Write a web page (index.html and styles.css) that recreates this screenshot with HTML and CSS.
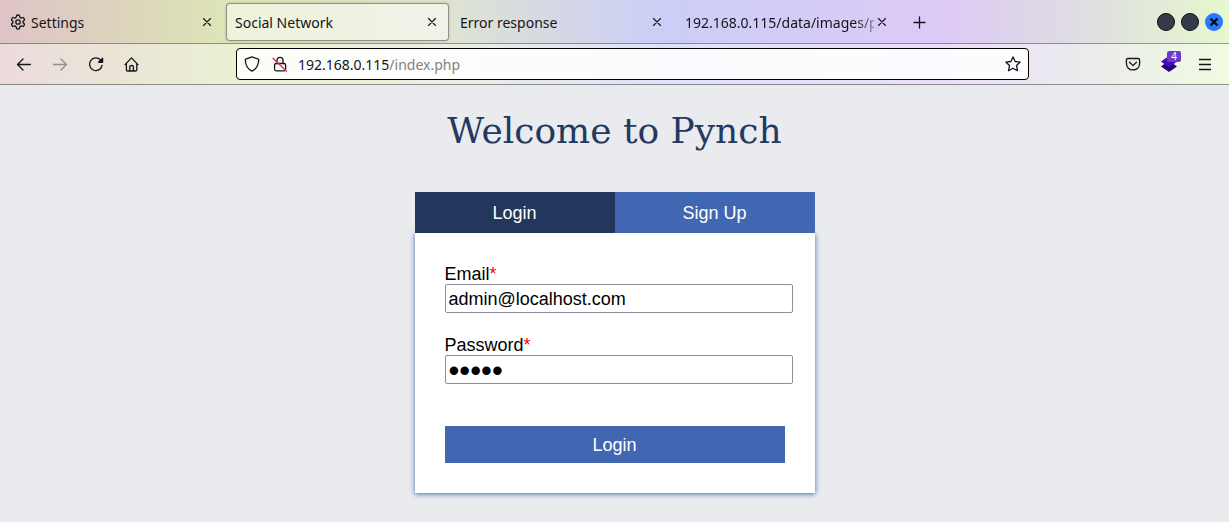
FILE: index.html
```
<!DOCTYPE html>
<html lang="en">
<head>
<meta charset="utf-8">
<title>Social Network</title>
<link rel="stylesheet" href="styles.css">
</head>
<body>
<header class="browser">
  <div class="tabbar">
    <nav class="tabs" aria-label="Open tabs">
      <div class="tab">
        <svg class="icon tab-icon" viewBox="0 0 16 16"><path d="M6.600 1.400Q8 .6 9.400 1.400L9.800 3.200 11.300 4.100 13.100 3.500Q14.500 4.400 14.500 5.900L13.100 7.200V8.800L14.500 10.100Q14.500 11.600 13.100 12.500L11.300 11.900 9.800 12.800 9.400 14.600Q8 15.400 6.600 14.600L6.200 12.800 4.700 11.900 2.900 12.500Q1.500 11.600 1.500 10.100L2.900 8.800V7.200L1.500 5.900Q1.500 4.400 2.900 3.500L4.700 4.100 6.200 3.200Z"/><circle cx="8" cy="8" r="2.200"/></svg>
        <span class="tab-title">Settings</span>
        <button class="tab-close" aria-label="Close Settings"><svg class="icon thin" viewBox="0 0 10 10"><path d="M1.500 1.500l7 7M8.500 1.500l-7 7"/></svg></button>
      </div>
      <div class="tab tab-active">
        <span class="tab-title">Social Network</span>
        <button class="tab-close" aria-label="Close Social Network"><svg class="icon thin" viewBox="0 0 10 10"><path d="M1.500 1.500l7 7M8.500 1.500l-7 7"/></svg></button>
      </div>
      <div class="tab">
        <span class="tab-title">Error response</span>
        <button class="tab-close" aria-label="Close Error response"><svg class="icon thin" viewBox="0 0 10 10"><path d="M1.500 1.500l7 7M8.500 1.500l-7 7"/></svg></button>
      </div>
      <div class="tab">
        <span class="tab-title tab-title-faded">192.168.0.115/data/images/pr</span>
        <button class="tab-close" aria-label="Close image tab"><svg class="icon thin" viewBox="0 0 10 10"><path d="M1.500 1.500l7 7M8.500 1.500l-7 7"/></svg></button>
      </div>
      <button class="tool" aria-label="New tab"><svg class="icon" viewBox="0 0 16 16"><path d="M8.500 3v11M3 8.500h11"/></svg></button>
    </nav>
    <div class="window-controls">
      <button class="dot" aria-label="Minimize"></button>
      <button class="dot" aria-label="Maximize"></button>
      <button class="dot dot-close" aria-label="Close window"><svg viewBox="0 0 18 18"><path d="M5.500 5.500l7 7M12.500 5.500l-7 7"/></svg></button>
    </div>
  </div>
  <div class="toolbar">
    <button class="tool" aria-label="Back"><svg class="icon" viewBox="0 0 16 16"><path d="M14.500 8.500H1.500M7 3L1.500 8.500 7 14"/></svg></button>
    <button class="tool" aria-label="Forward" disabled><svg class="icon" viewBox="0 0 16 16"><path d="M1.500 8.500h13M9 3L14.500 8.500 9 14"/></svg></button>
    <button class="tool" aria-label="Reload"><svg class="icon" viewBox="0 0 16 16"><path d="M12.500 4A6.300 6.300 0 1 0 14 9.500"/><path class="solid" d="M14.600 2.300V6.300H10.600Z"/></svg></button>
    <button class="tool" aria-label="Home"><svg class="icon" viewBox="0 0 16 16"><path d="M1 8.600L7.500 1.900 14 8.600M2.400 7.500V13.800Q2.400 15 3.600 15H11.600Q12.800 15 12.800 13.800V7.500M5.800 14.800V10.700Q5.800 9.500 7.600 9.500T9.400 10.700V14.800"/></svg></button>
    <div class="urlbar">
      <svg class="icon" viewBox="0 0 16 16"><path d="M8 .9L14.300 3.200Q14.800 3.400 14.700 4C14.400 10 12.200 13.200 8 15.200 3.800 13.200 1.600 10 1.300 4Q1.200 3.400 1.700 3.200Z"/></svg>
      <svg class="icon" viewBox="0 0 16 16"><path d="M5 7.500V4.300a3 3 0 0 1 6 0V7.500"/><rect x="2.600" y="7.500" width="11" height="7.300" rx="1.500"/><path class="slash" d="M1 2.200L14.500 15.300"/></svg>
      <a class="address" href="#"><span class="host">192.168.0.115</span>/index.php</a>
      <svg class="icon" viewBox="0 0 16 16"><path d="M8 .9L10.100 5.500 15.200 6.100 11.500 9.500 12.500 14.700 8 12.200 3.500 14.700 4.500 9.500 .8 6.100 5.900 5.500Z"/></svg>
    </div>
    <button class="tool" aria-label="Pocket"><svg class="icon" viewBox="0 0 16 16"><path d="M3 2.500H13Q14.600 2.500 14.600 4.100V7.300C14.600 11.500 11.800 13.900 8 13.900S1.400 11.500 1.400 7.300V4.100Q1.400 2.500 3 2.500ZM4.500 6.300L8 9.600 11.500 6.300"/></svg></button>
    <button class="tool extension" aria-label="Extension, 4 items">
      <svg class="layers" viewBox="0 0 16 16"><path class="layer-low" d="M0 10.500L8 4.500 16 10.500 8 16Z"/><path class="layer-top" d="M0 5.500L8 0 16 5.500 8 11.500Z"/></svg>
      <span class="badge">4</span>
    </button>
    <button class="tool" aria-label="Menu"><svg class="icon menu" viewBox="0 0 16 16"><path d="M2 3.500h12M2 8.500h12M2 13.500h12"/></svg></button>
  </div>
</header>
<main class="page">
  <h1 class="welcome">Welcome to Pynch</h1>
  <section class="auth">
    <div class="auth-tabs">
      <button class="auth-tab auth-tab-active">Login</button>
      <button class="auth-tab">Sign Up</button>
    </div>
    <form class="card">
      <div class="field">
        <label for="email">Email<span class="required">*</span></label>
        <input class="input" id="email" type="text" value="admin@localhost.com">
      </div>
      <div class="field">
        <label for="password">Password<span class="required">*</span></label>
        <input class="input input-password" id="password" type="password" value="admin">
      </div>
      <button class="submit" type="button">Login</button>
    </form>
  </section>
</main>
</body>
</html>
```
FILE: styles.css
```
* {
  box-sizing: border-box;
}

body {
  margin: 0;
  min-height: 100vh;
  background: #e9ebee;
  font-family: "Liberation Sans", Arial, sans-serif;
  font-size: 18px;
  color: #000;
}

button {
  padding: 0;
  border: 0;
  background: none;
  color: inherit;
  font: inherit;
}

.browser {
  background: linear-gradient(90deg, #dfc3c6 0%, #dcd5bc 10%, #dee6b6 19%, #dfe4d0 36%, #cbcef7 54%, #ddcaf6 77%, #dfdfdf 89%, #e6f8cf 100%);
  font-family: "Noto Sans", sans-serif;
  font-size: 14px;
  color: #15141a;
}

.icon {
  display: block;
  flex: none;
  width: 16px;
  height: 16px;
  fill: none;
  stroke: currentColor;
  stroke-width: 1.3;
  stroke-linecap: round;
  stroke-linejoin: round;
}

.icon .solid {
  fill: currentColor;
}

.icon .slash {
  stroke: #e22850;
}

.tabbar {
  display: flex;
  justify-content: space-between;
  align-items: center;
  height: 44px;
  padding: 0 6px 0 1px;
  border-bottom: 1px solid rgba(0, 0, 0, 0.35);
}

.tabs {
  display: flex;
  align-items: center;
  gap: 2px;
  min-width: 0;
}

.tab {
  display: flex;
  align-items: center;
  width: 223px;
  height: 38px;
  padding: 0 8px;
  border: 1px solid transparent;
  border-radius: 4px;
}

.tab-active {
  border-color: rgba(0, 0, 0, 0.4);
  background: rgba(255, 255, 255, 0.5);
  box-shadow: 0 0 3px rgba(0, 0, 0, 0.2);
}

.tab-icon {
  margin-right: 5px;
}

.tab-title {
  flex: 1;
  min-width: 0;
  padding-top: 2px;
  overflow: hidden;
  white-space: nowrap;
}

.tab-title-faded {
  -webkit-mask-image: linear-gradient(90deg, #000 170px, transparent 200px);
  mask-image: linear-gradient(90deg, #000 170px, transparent 200px);
}

.tab-close {
  display: grid;
  place-items: center;
  width: 16px;
  height: 24px;
}

.thin {
  width: 10px;
  height: 10px;
  stroke-width: 1.1;
}

.window-controls {
  display: flex;
  gap: 6px;
}

.dot {
  width: 18px;
  height: 18px;
  border: 1px solid #0c0d12;
  border-radius: 50%;
  background: #363b49;
}

.dot-close {
  border: 0;
  background: #2777ff;
}

.dot-close svg {
  display: block;
  width: 18px;
  height: 18px;
  stroke: #0c0d12;
  stroke-width: 2.4;
}

.toolbar {
  display: flex;
  align-items: center;
  height: 41px;
  padding: 0 6px;
  border-bottom: 1px solid rgba(0, 0, 0, 0.4);
  background: rgba(255, 255, 255, 0.4);
}

.tool {
  display: grid;
  flex: none;
  place-items: center;
  width: 36px;
  height: 32px;
}

.tool:disabled {
  opacity: 0.4;
}

.menu {
  stroke-linecap: butt;
}

.urlbar {
  display: flex;
  flex: 1;
  align-items: center;
  gap: 12px;
  height: 32px;
  margin: 0 86px;
  padding: 0 7px;
  border: 1px solid #000;
  border-radius: 4px;
  background: rgba(255, 255, 255, 0.85);
}

.address {
  flex: 1;
  min-width: 0;
  margin-left: -2px;
  overflow: hidden;
  color: #828282;
  white-space: nowrap;
  text-decoration: none;
}

.host {
  color: #15141a;
}

.extension {
  position: relative;
}

.layers {
  display: block;
  width: 16px;
  height: 16px;
}

.layer-low {
  fill: #270080;
}

.layer-top {
  fill: #4a08b0;
}

.badge {
  position: absolute;
  top: 3px;
  right: 6px;
  width: 14px;
  height: 11px;
  border-radius: 2px;
  background: #6a3bc4;
  color: #fff;
  font-size: 10px;
  line-height: 11px;
  text-align: center;
}

.page {
  display: flex;
  flex-direction: column;
  align-items: center;
  padding: 25px 16px;
}

.welcome {
  margin: 0 0 40px;
  color: #23395f;
  font-family: "DejaVu Serif", serif;
  font-size: 36px;
  font-weight: 400;
  line-height: 42px;
}

.auth {
  width: 100%;
  max-width: 400px;
}

.auth-tabs {
  display: grid;
  grid-template-columns: 1fr 1fr;
}

.auth-tab {
  padding: 11px 10px 9px;
  background: #4267b2;
  color: #fff;
  line-height: 21px;
}

.auth-tab-active {
  background: #23375d;
}

.card {
  display: flex;
  flex-direction: column;
  gap: 20px;
  padding: 31px 30px 30px;
  background: #fff;
  box-shadow: 0 1px 5px #4267b2;
}

.field {
  display: flex;
  flex-direction: column;
  line-height: 21px;
}

.field label {
  height: 20px;
}

.field + .field {
  padding-top: 2px;
}

.required {
  color: #f00;
}

.input {
  width: calc(100% + 8px);
  height: 29px;
  padding: 2px 3px 0;
  border: 1px solid #8f8f9d;
  border-radius: 2px;
  background: #fff;
  color: #000;
  font: inherit;
}

.input-password {
  font-size: 31px;
}

.submit {
  margin-top: 22px;
  padding: 9px 8px 7px;
  background: #4267b2;
  color: #fff;
  line-height: 21px;
}
```
